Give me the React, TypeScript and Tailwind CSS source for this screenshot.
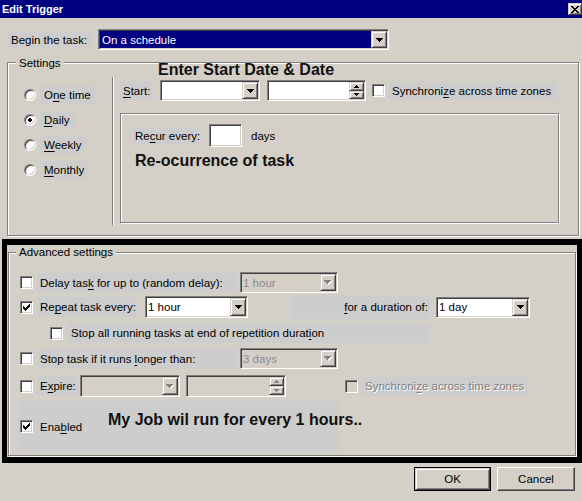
import React from 'react';

const sunken =
  'border border-t-[#808080] border-l-[#808080] border-r-white border-b-white shadow-[inset_1px_1px_0_#404040,inset_-1px_-1px_0_#d4d0c8]';
const raised =
  'border border-t-[#d4d0c8] border-l-[#d4d0c8] border-r-[#404040] border-b-[#404040] shadow-[inset_1px_1px_0_#fff,inset_-1px_-1px_0_#808080]';
const etched = 'border border-[#808080] shadow-[inset_1px_1px_0_#fff,1px_1px_0_#fff]';
const dimText = 'text-[#808080] [text-shadow:1px_1px_0_#fff]';

// tiny pixel glyphs (arrows, check marks, close cross)
function Pix({ rows, color = '#000', shadow }: { rows: string[]; color?: string; shadow?: string }) {
  const cells: [number, number][] = [];
  rows.forEach((r, y) => [...r].forEach((c, x) => c === 'X' && cells.push([x, y])));
  const pad = shadow ? 1 : 0;
  return (
    <svg width={rows[0].length + pad} height={rows.length + pad} shapeRendering="crispEdges">
      {shadow && cells.map(([x, y]) => <rect key={`s${x}-${y}`} x={x + 1} y={y + 1} width={1} height={1} fill={shadow} />)}
      {cells.map(([x, y]) => (
        <rect key={`${x}-${y}`} x={x} y={y} width={1} height={1} fill={color} />
      ))}
    </svg>
  );
}

const DOWN = ['XXXXXXX', '.XXXXX.', '..XXX..', '...X...'];
const SMALL_UP = ['..X..', '.XXX.', 'XXXXX'];
const SMALL_DOWN = ['XXXXX', '.XXX.', '..X..'];
const TICK = ['......X', '.....XX', 'X...XXX', 'XX.XXX.', 'XXXXX..', '.XXX...', '..X....'];
const CROSS = ['XX....XX', '.XX..XX.', '..XXXX..', '...XX...', '..XXXX..', '.XX..XX.', 'XX....XX'];

const U = ({ children }: { children: React.ReactNode }) => (
  <span className="underline underline-offset-[2px]">{children}</span>
);

function Lbl({ className = '', children }: { className?: string; children: React.ReactNode }) {
  return (
    <span className={`flex shrink-0 items-center whitespace-nowrap bg-[#cdcdcd] ${className}`}>
      <span>{children}</span>
    </span>
  );
}

function Check({ checked = false, disabled = false, className = '' }: { checked?: boolean; disabled?: boolean; className?: string }) {
  return (
    <span
      className={`flex h-[13px] w-[13px] shrink-0 items-center justify-center ${sunken} ${
        disabled ? 'bg-[#d4d0c8]' : 'bg-white'
      } ${className}`}
    >
      {checked && <Pix rows={TICK} />}
    </span>
  );
}

function Radio({ checked = false }: { checked?: boolean }) {
  return (
    <span className="flex h-[12px] w-[12px] shrink-0 items-center justify-center rounded-full border border-t-[#808080] border-l-[#808080] border-r-white border-b-white bg-white shadow-[inset_1px_1px_0_#404040,inset_-1px_-1px_0_#d4d0c8]">
      {checked && <Pix rows={['.XX.', 'XXXX', 'XXXX', '.XX.']} />}
    </span>
  );
}

function DropBtn({ disabled = false }: { disabled?: boolean }) {
  return (
    <span className={`flex h-full w-[16px] shrink-0 items-center justify-center bg-[#d4d0c8] ${raised}`}>
      {disabled ? <Pix rows={DOWN} color="#808080" shadow="#fff" /> : <Pix rows={DOWN} />}
    </span>
  );
}

function Combo({
  value = '',
  disabled = false,
  focused = false,
  className = '',
}: {
  value?: string;
  disabled?: boolean;
  focused?: boolean;
  className?: string;
}) {
  return (
    <div className={`flex h-[21px] shrink-0 p-[1px] ${sunken} ${disabled ? 'bg-[#d4d0c8]' : 'bg-white'} ${className}`}>
      <div
        className={`flex flex-1 items-center whitespace-nowrap ${
          focused ? 'bg-[#000080] pl-[2px] text-white' : 'pl-[1px]'
        } ${disabled ? 'text-[#8a8a8a]' : ''}`}
      >
        {value}
      </div>
      <DropBtn disabled={disabled} />
    </div>
  );
}

function Spin({ disabled = false, className = '' }: { disabled?: boolean; className?: string }) {
  const arrow = disabled ? '#808080' : '#000';
  return (
    <div className={`flex h-[21px] shrink-0 p-[1px] ${sunken} ${disabled ? 'bg-[#d4d0c8]' : 'bg-white'} ${className}`}>
      <div className="flex-1" />
      <div className="flex w-[15px] flex-col">
        <span className={`flex flex-1 items-center justify-center bg-[#d4d0c8] ${raised}`}>
          <Pix rows={SMALL_UP} color={arrow} />
        </span>
        <span className={`flex flex-1 items-center justify-center bg-[#d4d0c8] ${raised}`}>
          <Pix rows={SMALL_DOWN} color={arrow} />
        </span>
      </div>
    </div>
  );
}

function Group({ title, className = '', legendLeft, children }: { title: string; className?: string; legendLeft: string; children: React.ReactNode }) {
  return (
    <div className={`relative ${etched} ${className}`}>
      <span className={`absolute ${legendLeft} bg-[#d4d0c8] px-[3px] leading-[14px]`}>{title}</span>
      {children}
    </div>
  );
}

const Note = ({ className, children }: { className: string; children: React.ReactNode }) => (
  <div className={`absolute whitespace-nowrap text-[16px] font-bold leading-[18px] text-[#111] ${className}`}>{children}</div>
);

export default function App() {
  return (
    <div className="relative h-[501px] w-[582px] overflow-hidden bg-[#d4d0c8] font-['Liberation_Sans',Arial,sans-serif] text-[11.5px] leading-[14px] text-black">
      {/* title bar */}
      <div className="flex h-[18px] items-start justify-between bg-[#000080] pl-[2px]">
        <span className="mt-[2px] text-[11px] font-bold leading-[14px] text-white">Edit Trigger</span>
        <span className={`mt-[3px] flex h-[12px] w-[14px] items-center justify-center bg-[#d4d0c8] ${raised}`}>
          <Pix rows={CROSS} />
        </span>
      </div>

      {/* begin the task */}
      <div className="ml-[8px] mt-[11px] flex h-[21px] items-center">
        <Lbl className="h-[15px] w-[82px] pl-[3px]">Begin the task:</Lbl>
        <Combo className="ml-[8px] w-[291px]" value="On a schedule" focused />
      </div>

      {/* settings */}
      <Group title="Settings" legendLeft="-top-[7px] left-[8px]" className="ml-[7px] mt-[12px] h-[174px] w-[572px]">
        <div className="flex h-full">
          <div className="flex w-[104px] shrink-0 flex-col gap-[7px] pl-[16px] pt-[23px]">
            {[
              [<>O<U>n</U>e time</>, false],
              [<><U>D</U>aily</>, true],
              [<><U>W</U>eekly</>, false],
              [<><U>M</U>onthly</>, false],
            ].map(([label, on], i) => (
              <div key={i} className="flex h-[18px] items-center">
                <Radio checked={on as boolean} />
                <Lbl className="ml-[4px] h-[18px] px-[4px]">{label as React.ReactNode}</Lbl>
              </div>
            ))}
          </div>
          <div className="mt-[14px] h-[148px] w-[2px] border-l border-r border-l-[#808080] border-r-white" />
          <div className="flex flex-col">
            <div className="mt-[17px] flex h-[21px] items-center">
              <Lbl className="ml-[6px] h-[18px] w-[33px] pl-[3px]">
                <U>S</U>tart:
              </Lbl>
              <Combo className="ml-[7px] w-[100px]" />
              <Spin className="ml-[7px] w-[99px]" />
              <Check className="ml-[6px]" />
              <Lbl className="ml-[5px] h-[18px] w-[167px] pl-[2px]">
                Synchroni<U>z</U>e across time zones
              </Lbl>
            </div>
            <div className={`ml-[6px] mt-[12px] h-[110px] w-[439px] ${etched}`}>
              <div className="ml-[12px] mt-[10px] flex h-[23px] items-center">
                <Lbl className="h-[16px] w-[66px] pl-[2px]">
                  Re<U>c</U>ur every:
                </Lbl>
                <span className={`ml-[10px] h-[23px] w-[33px] bg-white ${sunken}`} />
                <span className="ml-[9px]">days</span>
              </div>
            </div>
          </div>
        </div>
      </Group>

      {/* advanced settings, framed */}
      <div className="ml-[2px] mt-[3px] h-[224px] w-[580px] border-x-[5px] border-y-[6px] border-black">
        <Group
          title="Advanced settings"
          legendLeft="-top-[8px] left-[7px]"
          className="ml-[1px] mt-[7px] h-[204px] w-[568px]"
        >
          <div className="flex flex-col">
            <div className="ml-[11px] mt-[19px] flex h-[21px] items-center">
              <Check />
              <Lbl className="ml-[5px] h-[20px] w-[199px] pl-[2px]">
                Delay tas<U>k</U> for up to (random delay):
              </Lbl>
              <Combo className="ml-[3px] w-[98px]" value="1 hour" disabled />
            </div>

            <div className="ml-[11px] mt-[3px] flex h-[22px] items-center">
              <Check checked />
              <Lbl className="ml-[5px] h-[20px] w-[99px] pl-[2px]">
                Re<U>p</U>eat task every:
              </Lbl>
              <Combo className="ml-[8px] !h-[22px] w-[103px]" value="1 hour" />
              <Lbl className="ml-[42px] h-[24px] w-[140px] justify-end pr-[2px]">
                <U>f</U>or a duration of:
              </Lbl>
              <Combo className="ml-[6px] w-[94px]" value="1 day" />
            </div>

            <div className="ml-[41px] mt-[5px] flex h-[20px] items-center">
              <Check />
              <Lbl className="ml-[5px] h-[20px] w-[362px] pl-[3px]">
                Stop all running tasks at end of repetition durat<U>i</U>on
              </Lbl>
            </div>

            <div className="ml-[11px] mt-[5px] flex h-[21px] items-center">
              <Check />
              <Lbl className="ml-[5px] h-[20px] w-[199px] pl-[2px]">
                Stop task if it runs <U>l</U>onger than:
              </Lbl>
              <Combo className="ml-[3px] w-[98px]" value="3 days" disabled />
            </div>

            <div className="ml-[11px] mt-[6px] flex h-[22px] items-center">
              <Check />
              <Lbl className="ml-[5px] h-[20px] w-[40px] pl-[2px]">
                E<U>x</U>pire:
              </Lbl>
              <Combo className="ml-[2px] !h-[22px] w-[100px]" disabled />
              <Spin className="ml-[6px] !h-[22px] w-[100px]" disabled />
              <Check className="ml-[59px]" disabled />
              <Lbl className={`ml-[4px] h-[19px] w-[165px] pl-[3px] ${dimText}`}>
                Synchroni<U>z</U>e across time zones
              </Lbl>
            </div>

            <div className="ml-[9px] mt-[4px] flex h-[51px] w-[320px] items-center bg-[#cdcdcd] pl-[2px]">
              <Check checked />
              <span className="ml-[7px]">
                Ena<U>b</U>led
              </span>
            </div>
          </div>
        </Group>
      </div>

      {/* dialog buttons */}
      <div className="mt-[4px] flex justify-end pr-[7px]">
        <button className="h-[24px] w-[77px] border border-black bg-[#d4d0c8] p-0">
          <span className={`flex h-full w-full items-center justify-center ${raised}`}>OK</span>
        </button>
        <button className="ml-[6px] flex h-[24px] w-[78px] items-center justify-center border border-t-white border-l-white border-r-[#404040] border-b-[#404040] bg-[#d4d0c8] shadow-[inset_-1px_-1px_0_#808080]">
          Cancel
        </button>
      </div>

      <Note className="left-[158px] top-[61px]">Enter Start Date &amp; Date</Note>
      <Note className="left-[135px] top-[152px]">Re-ocurrence of task</Note>
      <Note className="left-[108px] top-[411px]">My Job wil run for every 1 hours..</Note>
    </div>
  );
}
